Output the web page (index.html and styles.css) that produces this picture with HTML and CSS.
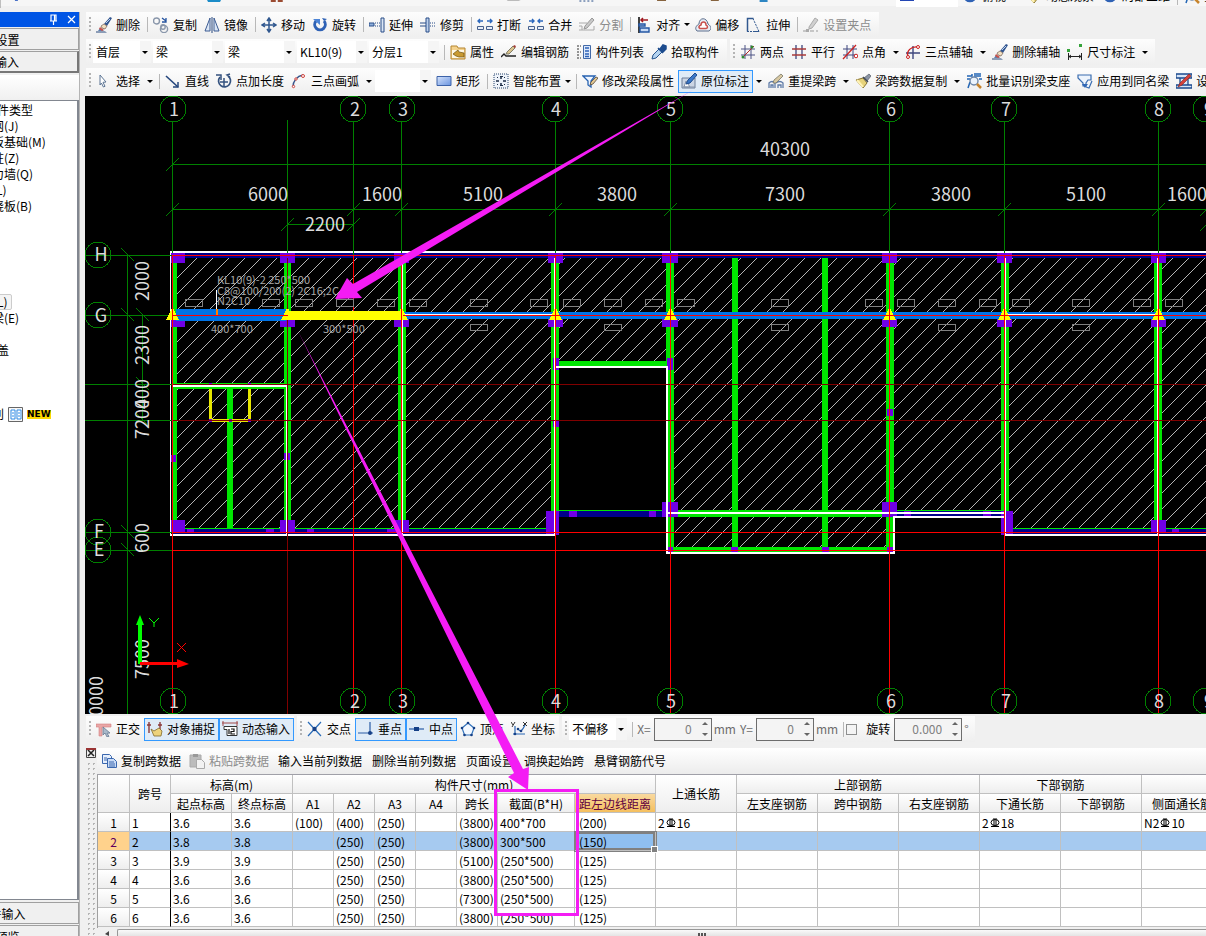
FILE: index.html
```html
<!DOCTYPE html>
<html lang="zh-CN">
<head>
<meta charset="utf-8">
<title>梁原位标注</title>
<link rel="stylesheet" href="styles.css">
</head>
<body>
<svg class="sprite" aria-hidden="true">
  <symbol id="brush" viewBox="0 0 16 16"><path d="M0 14.5h9l2 1H0z" fill="#26497c"/><path d="M2 14l2-3 4 3z" fill="#5a7fb0"/><path d="M8 7l6-7 2 1-5 8z" fill="#31558f"/><path d="M10 6l4-4" stroke="#b9cfee"/><path d="M5 9l3-2 3 2-2 3-3-1z" fill="#f2dfc0" stroke="#6e5a50" stroke-width=".7"/><path d="M4 10l4 3-2 1-3-2z" fill="#c9524a"/></symbol>
  <symbol id="copy" viewBox="0 0 16 16"><g fill="none" stroke="#8a97ab" stroke-width="1.4"><circle cx="3.5" cy="4" r="3"/><circle cx="11" cy="12" r="3.6"/><circle cx="10" cy="10" r="2.2"/></g><path d="M9 1l4 3m0-3v4H9" stroke="#2453a0" fill="none" stroke-width="1.3"/></symbol>
  <symbol id="mirror" viewBox="0 0 16 16"><path d="M6 1v13H1zM10 1v13h5z" fill="#dbe6f5" stroke="#3d5c93"/><path d="M8 0v16" stroke="#29497f"/></symbol>
  <symbol id="move" viewBox="0 0 16 16"><path d="M8 2v12M2 8h12M6 4l2-3 2 3M6 12l2 3 2-3M4 6L1 8l3 2M12 6l3 2-3 2" fill="none" stroke="#31588f" stroke-width="1.5"/></symbol>
  <symbol id="rotate" viewBox="0 0 16 16"><path d="M4 4a5.3 5.3 0 1 0 8 0" fill="none" stroke="#2f62b5" stroke-width="3"/><path d="M1 2h7v6z" fill="#4c84d6"/><path d="M12 4l-2-3 5 1z" fill="#2f62b5"/></symbol>
  <symbol id="extend" viewBox="0 0 16 16"><path d="M0 6h5v3H0z" fill="#8fb0dd" stroke="#294d88"/><path d="M6 6h6M6 9h6" stroke="#294d88" stroke-dasharray="1 1"/><path d="M12 1h3v14h-3z" fill="#dbe6f5" stroke="#294d88"/></symbol>
  <symbol id="trim" viewBox="0 0 16 16"><path d="M0 6h6M0 9h6" stroke="#294d88"/><path d="M10 6h6M10 9h6" stroke="#294d88" stroke-dasharray="1 1"/><path d="M6 1h3v14H6z" fill="#bcd0ec" stroke="#294d88"/></symbol>
  <symbol id="break" viewBox="0 0 16 16"><path d="M1 4h5M10 4h5M3 2L1 4l2 2M13 2l2 2-2 2" fill="none" stroke="#2c68bd" stroke-width="1.4"/><path d="M.5 9.500h6v3h-6zM9.500 9.500h6v3h-6z" fill="#e8eef8" stroke="#46618e"/></symbol>
  <symbol id="join" viewBox="0 0 16 16"><path d="M1 4h5M10 4h5M4 2l2 2-2 2M12 2l-2 2 2 2" fill="none" stroke="#2c68bd" stroke-width="1.400"/><path d="M.5 9.500h6v3h-6zM9.500 9.500h6v3h-6z" fill="#e8eef8" stroke="#46618e"/></symbol>
  <symbol id="split" viewBox="0 0 16 16"><path d="M0 6h8M0 13h15M0 9h3v4M15 9v4" fill="none" stroke="#aaa"/><path d="M5 12l1-3 7-8 2 2-7 8z" fill="#c9c9c9" stroke="#999"/></symbol>
  <symbol id="align" viewBox="0 0 16 16"><path d="M3 0v16" stroke="#111" stroke-width="1.6"/><path d="M5 3h7M7 1L5 3l2 2" fill="none" stroke="#a01820" stroke-width="1.500"/><path d="M3 7h6v2H3zM4 11h9v4H4z" fill="#c6d9f4" stroke="#2457a4" stroke-width="1.400"/></symbol>
  <symbol id="offset" viewBox="0 0 16 16"><path d="M2 14c-3-3 0-6 2-7 0-7 8-7 9 0 3 2 4 5 1 7z" fill="#e8edf5" stroke="#5d6f8d"/><path d="M5 11.500c-2-1-1-3 1-3.500 0-4 5-4 5 0 2 1 2 3 0 3.500z" fill="#fff" stroke="#c9514d" stroke-width="1.500"/></symbol>
  <symbol id="stretch" viewBox="0 0 16 16"><path d="M1.500 14.500v-13h6" fill="none" stroke="#31588f" stroke-width="1.500"/><path d="M7 1.500l5 11M1 14.500h8" fill="none" stroke="#31588f" stroke-dasharray="2 1"/><path d="M9 14.500h4l-1-2" fill="none" stroke="#31588f"/></symbol>
  <symbol id="grip" viewBox="0 0 16 16"><path d="M0 14h4M7 14h4M13 14h2" stroke="#999"/><path d="M3 12h3v3H3z" fill="#aaa"/><path d="M6 10l6-9 3 2-6 8-3 1z" fill="#d0d0d0" stroke="#aaa"/></symbol>
  <symbol id="props" viewBox="0 0 16 16"><path d="M1 2h6l1 2h7v11H1z" fill="#f4d28d" stroke="#b5852e"/><path d="M2 6h12v8H2z" fill="#fff8e4"/><path d="M3 10l5-4 1 2 5 1v4H9l-3-1z" fill="#c99a32" stroke="#6f5212" stroke-width=".7"/></symbol>
  <symbol id="rebar" viewBox="0 0 16 16"><path d="M0 13l3-3 2 2h10" fill="none" stroke="#222" stroke-width="1.400"/><path d="M5 10l1-2 6-6 2 2-6 6z" fill="#d9c28b" stroke="#665" stroke-width=".8"/><path d="M12 2l2-1 1 2-1 1z" fill="#a73d37"/></symbol>
  <symbol id="list" viewBox="0 0 16 16"><path d="M1 2h4M1 5h2M1 8h4M1 11h2M1 14h4" stroke="#333" stroke-dasharray="2 1"/><path d="M7.500 1.500h7v13h-7z" fill="#dce8fa" stroke="#4169a8"/><path d="M9 4h4M9 7h4M9 10h4M9 12.500h4" stroke="#2c62b8" stroke-width="1.400"/></symbol>
  <symbol id="pick" viewBox="0 0 16 16"><path d="M1 15l1-4 6-6 3 3-6 6z" fill="#b4d3f0" stroke="#28558f"/><path d="M7 4l5 5M9 5l3-4 3 1 0 3-3 3z" fill="#1d4c8e" stroke="#1d4c8e" stroke-width="1.500"/></symbol>
  <symbol id="twopt" viewBox="0 0 16 16"><path d="M5 1v14M11 1v14M1 5h14M1 11h14" stroke="#4c5384"/><path d="M2 14L14 2" stroke="#b02a2a"/><circle cx="3" cy="13" r="1.500" fill="#2f8a2f"/><circle cx="12" cy="3" r="1.500" fill="#2f8a2f"/></symbol>
  <symbol id="parallel" viewBox="0 0 16 16"><path d="M5 1v14M11 1v14" stroke="#3e477e" stroke-width="1.300"/><path d="M1 5h14M1 11h14" stroke="#a83a3a" stroke-width="1.300"/></symbol>
  <symbol id="angle" viewBox="0 0 16 16"><path d="M5 1v14M11 1v14M1 5h14M1 11h14" stroke="#3e477e"/><path d="M1 15L14 1" stroke="#c22" stroke-width="1.300"/><circle cx="14" cy="12" r="1.800" fill="#fff" stroke="#c22"/></symbol>
  <symbol id="axis3" viewBox="0 0 16 16"><path d="M1 9h14M8 2v13" stroke="#3e477e" stroke-width="1.400"/><path d="M3 13C1 7 6 2 13 3" fill="none" stroke="#c22" stroke-width="1.400"/><circle cx="3" cy="13" r="1.500" fill="#fff" stroke="#c22"/><circle cx="13" cy="3" r="1.500" fill="#fff" stroke="#c22"/></symbol>
  <symbol id="dim" viewBox="0 0 16 16"><path d="M1.500 9v7M14.500 9v7M2 12.500h12M4 11l-2 1.500L4 14M12 11l2 1.500-2 1.500" fill="none" stroke="#222"/><path d="M0 5h3v3H0zM12 0h3v3h-3z" fill="#36a33b"/></symbol>
  <symbol id="select" viewBox="0 0 16 16"><path d="M4 2l6 7-3 .3 2 4-1.600.700-2-4L4 12z" fill="#fff" stroke="#5c7594"/></symbol>
  <symbol id="line" viewBox="0 0 16 16"><path d="M1 3l12 11" stroke="#24457c" stroke-width="1.600"/><path d="M13 9v5H8" fill="none" stroke="#24457c" stroke-width="1.500"/></symbol>
  <symbol id="ptlen" viewBox="0 0 16 16"><path d="M4 4a6 6 0 1 0 8-1" fill="none" stroke="#34527f" stroke-width="1.700"/><path d="M0 2h5v5M14 4l-3-2 3-1M8 5v8M4 9h8" fill="none" stroke="#34527f" stroke-width="1.500"/></symbol>
  <symbol id="arc" viewBox="0 0 16 16"><path d="M2 14C2 8 6 3 12 2" fill="none" stroke="#35548a" stroke-width="1.500"/><g fill="#fff" stroke="#d0433c"><circle cx="2.500" cy="13.500" r="1.200"/><circle cx="5" cy="6" r="1.200"/><circle cx="12" cy="3" r="1.500"/></g></symbol>
  <symbol id="rect" viewBox="0 0 16 16"><defs><linearGradient id="rg" x2="1" y2="1"><stop stop-color="#d5e3fb"/><stop offset="1" stop-color="#6a94e0"/></linearGradient></defs><path d="M1 3.500h14v9H1z" fill="url(#rg)" stroke="#3c62a8"/></symbol>
  <symbol id="smart" viewBox="0 0 16 16"><path d="M1 1h14v14H1z" fill="#eef3fa" stroke="#28466f" stroke-dasharray="1 1"/><path d="M8 3v3M8 10v3M3 8h3M10 8h3" stroke="#1c2c45" stroke-width="1.500"/><path d="M4 4h1v1H4zM11 4h1v1h-1zM4 11h1v1H4zM11 11h1v1h-1zM7 3h3v1H7zM7 12h3v1H7z" fill="#1c2c45"/></symbol>
  <symbol id="modify" viewBox="0 0 16 16"><path d="M1 3h12l-4 5v6l-3-2V8z" fill="#eef5ff" stroke="#2762b0" stroke-width="1.300"/><path d="M8 12l1-3 5-5 2 1-5 6z" fill="#e3c892" stroke="#54483a" stroke-width=".8"/></symbol>
  <symbol id="inplace" viewBox="0 0 16 16"><path d="M1 5h13v10H1z" fill="#cbd5e4" stroke="#6d7e99"/><path d="M3 14l2-6 4 6zM2 14h12" fill="#fff" stroke="#8292ab"/><path d="M5 11l2-4 7-7 2 2-7 8z" fill="#3a78c9" stroke="#1f4c8e"/></symbol>
  <symbol id="respan" viewBox="0 0 16 16"><path d="M1 15V10q3-3 6 0v5M8 10q4-3 7 0v5M3 15v-3h2v3M10 15v-3h3v3" fill="none" stroke="#5f7ba7" stroke-width="1.300"/><path d="M5 10l1-3 7-6 2 2-7 7z" fill="#d8c8a2" stroke="#776" stroke-width=".8"/></symbol>
  <symbol id="sweep" viewBox="0 0 16 16"><path d="M9 5l5-4 2 2-4 5z" fill="#8b94a4" stroke="#565d69" stroke-width=".7"/><path d="M1 7l7-2 4 5-4 5z" fill="#e7d37b" stroke="#8a7530"/><path d="M2 7l6 7" stroke="#fff3b7" stroke-width="2"/><path d="M8 4l5 5" stroke="#414a58" stroke-width="1.500"/></symbol>
  <symbol id="batch" viewBox="0 0 16 16"><path d="M1 3h5V1M8 3h7M1 6h3M13 6h3M2 15l2-6M8 1h7" fill="none" stroke="#2366b5" stroke-width="1.500"/><circle cx="8" cy="8" r="4" fill="#ecf4fc" stroke="#6d86a8" stroke-width="1.400"/><path d="M11 11l4 4" stroke="#c7842c" stroke-width="2.500"/></symbol>
  <symbol id="apply" viewBox="0 0 16 16"><path d="M1 2h13v5h-3L9 10v3H6v-3L1 5zM9 14l3 1 3-7" fill="#edf4fd" stroke="#3a6db0" stroke-width="1.200"/><path d="M5 11l3 4 3-4z" fill="#2f67b6"/></symbol>
  <symbol id="setup" viewBox="0 0 16 16"><path d="M0 1h16v4H0zM0 12h16v3H0zM4 5h8v7H4z" fill="#d7e4f6" stroke="#1b4a8e" stroke-width="1.300"/><path d="M2 14l2-4 9-9 2 2-9 9z" fill="#d5413a" stroke="#802020" stroke-width=".6"/></symbol>
  <symbol id="ortho" viewBox="0 0 16 16"><path d="M0 3h15v3H6v9H3V6H0z" fill="#e9a6a6" stroke="#d48080" stroke-width=".6"/><path d="M7 6l7 6-3 .3 2 3-2 .700-2-4-2 2z" fill="#a9b9ca" stroke="#5b7089" stroke-width=".7"/></symbol>
  <symbol id="snap" viewBox="0 0 16 16"><path d="M2 1v11M13 1v8M0 4h4M11 4h4" stroke="#8b3a3a" stroke-width="1.400"/><path d="M4 8l3 2 5-3 3 3-1 5H7z" fill="#edd37c" stroke="#81692b" stroke-width=".8"/></symbol>
  <symbol id="dyn" viewBox="0 0 16 16"><path d="M0 2h16M1 0v5M15 0v5" stroke="#a04848"/><path d="M2 5.500h13v9H5v-6H2z" fill="#fff" stroke="#333"/><path d="M7 8v5M9 8h3v2.500H9V13h4" fill="none" stroke="#111" stroke-width="1.200"/></symbol>
  <symbol id="cross" viewBox="0 0 16 16"><path d="M1 1l13 14M14 1L1 15" stroke="#2a6cb8" stroke-width="1.200"/><circle cx="7.500" cy="8" r="2.200" fill="#153f86"/></symbol>
  <symbol id="perp" viewBox="0 0 16 16"><path d="M0 12h15M12 1v11" stroke="#2a5ca5" stroke-width="1.200"/><circle cx="12" cy="12" r="2" fill="#153f86"/></symbol>
  <symbol id="mid" viewBox="0 0 16 16"><path d="M0 8h15" stroke="#2a5ca5" stroke-width="1.200"/><path d="M5 6h5v4H5z" fill="#153f86"/></symbol>
  <symbol id="vertex" viewBox="0 0 16 16"><path d="M8 2l6 5-2.500 7h-7L2 7z" fill="#f3f8ff" stroke="#3474bc" stroke-width="1.200"/><g fill="#153f86"><circle cx="8" cy="2" r="1.300"/><circle cx="14" cy="7" r="1.300"/><circle cx="11.500" cy="14" r="1.300"/><circle cx="4.500" cy="14" r="1.300"/><circle cx="2" cy="7" r="1.300"/></g></symbol>
  <symbol id="coord" viewBox="0 0 16 16"><path d="M4 5v8M2 13h12M7 8c3 4 5 0 7-4" fill="none" stroke="#2866b4" stroke-width="1.200"/><path d="M0 1l2 3m2-3L1 6M12 1l4 4m0-4l-4 4" stroke="#333"/><g fill="#153f86"><circle cx="7" cy="8" r="1.300"/><circle cx="4" cy="13" r="1.300"/><circle cx="10" cy="10" r="1.300"/></g></symbol>
  <symbol id="docs" viewBox="0 0 16 16"><path d="M1.500 1.500h7l2 2v7h-9z" fill="#e6effc" stroke="#3a67ae"/><path d="M6.500 5.500h6l3 3v6h-9z" fill="#c9dcf7" stroke="#3a67ae"/><path d="M3 5h3M3 7h3M8 9h5M8 11h6M8 13h6" stroke="#3a67ae"/></symbol>
  <symbol id="paste" viewBox="0 0 16 16"><path d="M1 2h11v12H1z" fill="#bcbcbc" stroke="#aaa"/><path d="M4 1h5v3H4z" fill="#999"/><path d="M7.500 6.500h5l3 3v6h-8z" fill="#f2f2f2" stroke="#aaa"/></symbol>
  <symbol id="phi" viewBox="0 0 12 12"><ellipse cx="6" cy="5.500" rx="4" ry="3" fill="none" stroke="#000"/><path d="M5 1v9M7 1v9M2 9.500h8" stroke="#000"/></symbol>
</svg>

<header class="topstrip">
  <svg class="fragments" viewBox="0 0 900 12" aria-hidden="true"><path d="M0 0v8" stroke="#888"/><path d="M15 0h3v1h-3z" fill="#4a72c8"/><path d="M208 0h14l-1 2h-12z" fill="#1b8cc8"/><path d="M272 0h5v2h-5zM279 0h5v2h-5z" fill="#9b4b32"/><path d="M509 0h14l-2 1h-11z" fill="#bbb"/><path d="M582 1h16" stroke="#234b87" stroke-dasharray="2 2"/><path d="M660 0h9v1h-9zM714 0h8v1h-8z" fill="#86633e"/><path d="M763 0h8v2h-8z" fill="#2e86c3"/></svg>
  <span class="swatch"></span>
  <span class="cut"><svg class="ico"><use href="#rotate"/></svg>俯视</span>
  <span class="cut wide"><svg class="ico"><use href="#sweep"/></svg>动态观察</span>
  <span class="cut"><svg class="ico"><use href="#rotate"/></svg>局部三维</span>
  <span class="sep"></span>
  <span class="cut"><svg class="ico"><use href="#batch"/></svg>全屏</span>
</header>

<div class="work">
<aside class="side"><div class="side-in">
  <div class="caption"><svg width="26" height="12" viewBox="0 0 26 12"><path d="M0 7h7M1 7V1h5v6M4.500 1v6M3.500 7v4" fill="none" stroke="#fff" stroke-width="1.200"/><path d="M18 2l7 7M25 2l-7 7" stroke="#fff" stroke-width="1.200"/></svg></div>
  <button class="nav">工程设置</button>
  <button class="nav raised">绘图输入</button>
  <div class="side-tools"></div>
  <ul class="tree">
    <li class="head">常用构件类型</li><li>轴网(J)</li><li>筏板基础(M)</li><li>框柱(Z)</li><li>剪力墙(Q)</li><li>梁(L)</li><li>现浇板(B)</li>
    <li></li><li></li><li></li><li></li><li></li>
    <li><span class="hot">梁(L)</span></li><li>圈梁(E)</li><li></li><li class="head2">顶盖</li><li></li><li></li><li></li>
    <li class="ident">识别<svg width="15" height="15" viewBox="0 0 15 15"><path d="M.5.5h14v14H.5z" fill="#f7f7f7" stroke="#666"/><path d="M3 3h4v9H3zM9 3h4v9H9z" fill="#fff" stroke="#2e8be6"/><path d="M4 6h2M4 9h2M10 6h2M10 9h2" stroke="#2e8be6"/></svg><b>NEW</b></li>
  </ul>
  <button class="nav">单构件输入</button>
  <button class="nav">报表预览</button>
</div></aside>

<main class="main">
<div class="bar r1"><div class="strip">
  <i class="grip"></i>
  <button class="tool"><svg class="ico"><use href="#brush"/></svg>删除</button><i class="sep"></i>
  <button class="tool"><svg class="ico"><use href="#copy"/></svg>复制</button>
  <button class="tool"><svg class="ico"><use href="#mirror"/></svg>镜像</button><i class="sep"></i>
  <button class="tool"><svg class="ico"><use href="#move"/></svg>移动</button>
  <button class="tool"><svg class="ico"><use href="#rotate"/></svg>旋转</button><i class="sep"></i>
  <button class="tool"><svg class="ico"><use href="#extend"/></svg>延伸</button>
  <button class="tool"><svg class="ico"><use href="#trim"/></svg>修剪</button><i class="sep"></i>
  <button class="tool"><svg class="ico"><use href="#break"/></svg>打断</button>
  <button class="tool"><svg class="ico"><use href="#join"/></svg>合并</button>
  <button class="tool" disabled><svg class="ico"><use href="#split"/></svg>分割</button><i class="sep"></i>
  <button class="tool menu"><svg class="ico"><use href="#align"/></svg>对齐</button>
  <button class="tool"><svg class="ico"><use href="#offset"/></svg>偏移</button>
  <button class="tool"><svg class="ico"><use href="#stretch"/></svg>拉伸</button><i class="sep"></i>
  <button class="tool" disabled><svg class="ico"><use href="#grip"/></svg>设置夹点</button>
</div></div>

<div class="bar r2"><div class="strip">
  <i class="grip"></i>
  <span class="combo small"><select aria-label="楼层"><option>首层</option></select></span>
  <span class="combo"><select aria-label="构件大类"><option>梁</option></select></span>
  <span class="combo"><select aria-label="构件类型"><option>梁</option></select></span>
  <span class="combo"><select aria-label="构件名称"><option>KL10(9)</option></select></span>
  <span class="combo"><select aria-label="分层"><option>分层1</option></select></span><i class="sep"></i>
  <button class="tool"><svg class="ico"><use href="#props"/></svg>属性</button>
  <button class="tool"><svg class="ico"><use href="#rebar"/></svg>编辑钢筋</button>
  <button class="tool"><svg class="ico"><use href="#list"/></svg>构件列表</button>
  <button class="tool"><svg class="ico"><use href="#pick"/></svg>拾取构件</button>
</div><div class="strip">
  <i class="grip"></i>
  <button class="tool"><svg class="ico"><use href="#twopt"/></svg>两点</button>
  <button class="tool"><svg class="ico"><use href="#parallel"/></svg>平行</button>
  <button class="tool"><svg class="ico"><use href="#angle"/></svg>点角</button><button class="drop" aria-label="点角选项"></button>
  <button class="tool"><svg class="ico"><use href="#axis3"/></svg>三点辅轴</button><button class="drop" aria-label="三点辅轴选项"></button>
  <button class="tool"><svg class="ico"><use href="#brush"/></svg>删除辅轴</button>
  <button class="tool"><svg class="ico"><use href="#dim"/></svg>尺寸标注</button><button class="drop" aria-label="尺寸标注选项"></button>
</div></div>

<div class="bar r3"><div class="strip grow">
  <i class="grip"></i>
  <button class="tool"><svg class="ico"><use href="#select"/></svg>选择</button><button class="drop" aria-label="选择选项"></button><i class="sep"></i>
  <button class="tool"><svg class="ico"><use href="#line"/></svg>直线</button>
  <button class="tool"><svg class="ico"><use href="#ptlen"/></svg>点加长度</button>
  <button class="tool"><svg class="ico"><use href="#arc"/></svg>三点画弧</button><button class="drop" aria-label="三点画弧选项"></button>
  <span class="combo small"><select aria-label="画弧方式"><option></option></select></span>
  <button class="tool"><svg class="ico"><use href="#rect"/></svg>矩形</button><i class="sep"></i>
  <button class="tool menu"><svg class="ico"><use href="#smart"/></svg>智能布置</button><i class="sep"></i>
  <button class="tool"><svg class="ico"><use href="#modify"/></svg>修改梁段属性</button>
  <button class="tool on"><svg class="ico"><use href="#inplace"/></svg>原位标注</button><button class="drop" aria-label="原位标注选项"></button>
  <button class="tool"><svg class="ico"><use href="#respan"/></svg>重提梁跨</button><button class="drop" aria-label="重提梁跨选项"></button>
  <button class="tool"><svg class="ico"><use href="#sweep"/></svg>梁跨数据复制</button><button class="drop" aria-label="梁跨数据复制选项"></button>
  <button class="tool"><svg class="ico"><use href="#batch"/></svg>批量识别梁支座</button>
  <button class="tool"><svg class="ico"><use href="#apply"/></svg>应用到同名梁</button>
  <button class="tool"><svg class="ico"><use href="#setup"/></svg>设置拱梁</button>
</div></div>

<div class="canvas">
<svg class="plan" viewBox="85 96 1121 618" preserveAspectRatio="xMinYMin slice" role="img" aria-label="梁平面图">
  <defs>
    <pattern id="hatch" width="16" height="16" patternUnits="userSpaceOnUse" patternTransform="translate(7 0)"><path d="M-1 17L17-1" stroke="#b4b4b4" shape-rendering="crispEdges"/></pattern>
    <circle id="bub" r="13" fill="none" stroke="#008000"/>
    <path id="tk" d="M-6 7L7-6" stroke="#008000"/>
    <path id="tl" d="M-6-7L7 6" stroke="#008000"/>
    <path id="tri" d="M-.5-7h2L7 4H-6z" fill="#ff0"/>
    <path id="mark" d="M.5.5h17v7H.5z" fill="none" stroke="#808080"/>
    <path id="mark2" d="M.5.5h17v6H.5z" fill="none" stroke="#808080"/>
  </defs>
  <path fill="url(#hatch)" d="M173 258H1206V529H1005V511H890V548H668V366H556V529H173z"/>

  <g shape-rendering="crispEdges">
    <g fill="#00e600">
      <path d="M172 253h5v280h-5zM284 258h7v270h-7zM398 258h8v270h-8zM551 258h8v253h-8zM666 258h8v294h-8zM732 258h6v290h-6zM822 258h6v290h-6zM886 258h8v294h-8zM1001 258h8v254h-8zM1154 258h8v270h-8z"/>
      <path d="M172 383h119v1H172zM172 387h112v2H172zM227 387h6v141h-6zM176 528h379v1H176zM1009 528h197v1h-197zM559 361h108v5H559zM559 510h108v1H559zM674 510h213v7H674zM894 510h107v1H894zM668 547h226v5H668z"/>
    </g>
    <path fill="#00008b" d="M172 253h1034v5H172zM172 529h383v5H172zM1005 529h201v5h-201zM559 511h107v6H559zM894 511h110v5H894z"/>
    <path fill="#7000e6" d="M171 253h14v10h-14zM280 253h15v10h-15zM394 253h15v10h-15zM548 253h15v10h-15zM662 253h16v10h-16zM882 253h15v10h-15zM997 253h15v10h-15zM1151 253h15v10h-15zM171 319h14v8h-14zM280 319h15v8h-15zM394 319h15v8h-15zM548 319h15v8h-15zM662 319h16v8h-16zM882 319h15v8h-15zM997 319h15v8h-15zM1151 319h15v8h-15zM171 520h14v13h-14zM280 520h15v13h-15zM394 520h15v13h-15zM546 511h13v24h-13zM662 502h16v15h-16zM882 502h15v15h-15zM1001 511h12v24h-12zM1151 520h15v13h-15zM187 529h7v4h-7zM266 529h8v4h-8zM307 529h7v4h-7zM387 529h8v4h-8zM1172 529h7v4h-7zM569 511h8v6h-8zM649 511h7v6h-7zM904 511h7v5h-7zM983 511h8v5h-8zM553 358h6v12h-6zM667 358h6v12h-6zM553 420h6v7h-6zM887 409h6v7h-6zM171 455h5v7h-5zM284 453h6v7h-6zM668 547h5v5h-5zM731 547h7v5h-7zM822 547h7v5h-7zM887 547h6v5h-6z"/>
    <path fill="#e6e600" d="M209 389h3v33h-3zM248 389h3v33h-3zM209 419h42v3h-42z"/>
    <path fill="#7000e6" d="M209 383h3v2h-3zM248 383h3v2h-3zM209 419h3v3h-3zM229 419h3v3h-3zM248 419h3v3h-3z"/>
    <path fill="#fff" d="M170 251h1036v2H170zM170 251h1v285h-1zM170 534h385v2H170zM172 385h115v2H172zM286 385h1v149h-1zM402 258h1v276h-1zM554 258h1v278h-1zM556 366h112v2H556zM666 366h2v188h-2zM666 552h229v2H666zM893 516h2v38h-2zM893 516h111v2H893zM666 512h338v2H666zM1005 258h1v278h-1zM1005 534h201v2h-201zM1157 258h1v276h-1z"/>
    <path fill="#0073e6" d="M176 309h110v12H176zM403 312h803v7H403z"/>
    <path fill="#fff" d="M403 314h152v1H403zM1005 314h153v1h-153zM216 290h1v19h-1z"/>
    <path fill="#008000" d="M172 122h1v131h-1zM287 120h1v133h-1zM353 122h1v133h-1zM401 122h1v131h-1zM555 122h1v131h-1zM670 122h1v131h-1zM889 122h1v131h-1zM1004 122h1v131h-1zM1158 122h1v131h-1zM172 164h1034v1H172zM172 209h1034v1H172zM287 224h67v1h-67zM127 255h1v459h-1zM142 315h1v106h-1zM85 255h87v1H85zM85 315h87v1H85zM85 384h87v1H85zM85 420h87v1H85zM85 532h87v1H85zM85 550h87v1H85z"/>
    <path fill="#800000" d="M287 258h1v456h-1zM172 384h1034v1H172zM172 420h1034v1H172z"/>
    <use href="#tri" x="172" y="316"/><use href="#tri" x="287" y="316"/><use href="#tri" x="401" y="316"/><use href="#tri" x="555" y="316"/><use href="#tri" x="670" y="316"/><use href="#tri" x="889" y="316"/><use href="#tri" x="1004" y="316"/><use href="#tri" x="1158" y="316"/>
    <path fill="#f00" d="M172 255h1034v1H172zM172 315h116v1H172zM403 315h803v1H403zM172 532h1034v1H172zM172 550h1034v1H172zM172 255h1v459h-1zM353 255h1v459h-1zM401 255h1v459h-1zM555 255h1v459h-1zM670 255h1v459h-1zM889 255h1v459h-1zM1004 255h1v459h-1zM1158 255h1v459h-1z"/>
    <path fill="#ff0" d="M288 311h113v9H288z"/>
    <path fill="#ff8000" d="M216 309h2v6h-2z"/>
    <use href="#mark" x="185" y="299"/><use href="#mark" x="262" y="299"/><use href="#mark" x="295" y="299"/><use href="#mark" x="336" y="299"/><use href="#mark" x="377" y="299"/><use href="#mark" x="409" y="299"/><use href="#mark" x="470" y="299"/><use href="#mark" x="530" y="299"/><use href="#mark" x="563" y="299"/><use href="#mark" x="604" y="299"/><use href="#mark" x="645" y="299"/><use href="#mark" x="677" y="299"/><use href="#mark" x="771" y="299"/><use href="#mark" x="865" y="299"/><use href="#mark" x="897" y="299"/><use href="#mark" x="938" y="299"/><use href="#mark" x="979" y="299"/><use href="#mark" x="1012" y="299"/><use href="#mark" x="1072" y="299"/><use href="#mark" x="1133" y="299"/><use href="#mark" x="1165" y="299"/>
    <use href="#mark2" x="470" y="324"/><use href="#mark2" x="604" y="324"/><use href="#mark2" x="771" y="324"/><use href="#mark2" x="938" y="324"/><use href="#mark2" x="1072" y="324"/>
    <use href="#tk" x="172" y="164"/><use href="#tk" x="172" y="209"/><use href="#tk" x="353" y="209"/><use href="#tk" x="401" y="209"/><use href="#tk" x="555" y="209"/><use href="#tk" x="670" y="209"/><use href="#tk" x="889" y="209"/><use href="#tk" x="1004" y="209"/><use href="#tk" x="1158" y="209"/><use href="#tk" x="1206" y="209"/><use href="#tk" x="287" y="224"/><use href="#tk" x="353" y="224"/><use href="#tk" x="1206" y="224"/>
    <use href="#tl" x="127" y="255"/><use href="#tl" x="127" y="315"/><use href="#tl" x="142" y="315"/><use href="#tl" x="142" y="384"/><use href="#tl" x="142" y="420"/><use href="#tl" x="127" y="532"/><use href="#tl" x="127" y="550"/>
    <use href="#bub" x="173" y="109"/><use href="#bub" x="353" y="109"/><use href="#bub" x="402" y="109"/><use href="#bub" x="555" y="109"/><use href="#bub" x="670" y="109"/><use href="#bub" x="890" y="109"/><use href="#bub" x="1004" y="109"/><use href="#bub" x="1158" y="109"/><use href="#bub" x="1206" y="109"/>
    <use href="#bub" x="173" y="701"/><use href="#bub" x="353" y="701"/><use href="#bub" x="402" y="701"/><use href="#bub" x="555" y="701"/><use href="#bub" x="670" y="701"/><use href="#bub" x="890" y="701"/><use href="#bub" x="1004" y="701"/><use href="#bub" x="1158" y="701"/><use href="#bub" x="1206" y="701"/>
    <use href="#bub" x="98" y="255"/><use href="#bub" x="98" y="315"/><use href="#bub" x="98" y="532"/><use href="#bub" x="98" y="550"/>
  </g>

  <g class="num">
    <text x="174" y="116">1</text><text x="355" y="116">2</text><text x="403" y="116">3</text><text x="556" y="116">4</text><text x="671" y="116">5</text><text x="891" y="116">6</text><text x="1006" y="116">7</text><text x="1159" y="116">8</text><text x="1209" y="116">9</text>
    <text x="174" y="708">1</text><text x="355" y="708">2</text><text x="403" y="708">3</text><text x="556" y="708">4</text><text x="671" y="708">5</text><text x="891" y="708">6</text><text x="1006" y="708">7</text><text x="1159" y="708">8</text><text x="1209" y="708">9</text>
    <text x="101" y="261">H</text><text x="101" y="322">G</text><text x="99" y="538">F</text><text x="99" y="556">E</text>
    <text x="785" y="156">40300</text><text x="268" y="201">6000</text><text x="325" y="231">2200</text><text x="382" y="201">1600</text><text x="483" y="201">5100</text><text x="617" y="201">3800</text><text x="785" y="201">7300</text><text x="951" y="201">3800</text><text x="1086" y="201">5100</text><text x="1187" y="201">1600</text>
    <text transform="translate(149 281) rotate(-90)">2000</text><text transform="translate(149 345) rotate(-90)">2300</text><text transform="translate(149 419) rotate(-90)">7200</text><text transform="translate(149 394) rotate(-90)">400</text><text transform="translate(149 538) rotate(-90)">600</text><text transform="translate(149 659) rotate(-90)">7500</text><text transform="translate(103 701) rotate(-90)">10000</text>
  </g>
  <g class="note">
    <text x="217" y="284">KL10(9)-2 250*500</text><text x="217" y="295">C8@100/200(2) 2C16;2C</text><text x="217" y="305">N2C10</text><text x="211" y="333">400*700</text><text x="323" y="333">300*500</text>
  </g>
  <path d="M138 664V625h-2l4-10 4 10h-2v39z" fill="#0f0"/><path d="M140 662h37v-3l12 5-12 4v-3h-37z" fill="#f00"/>
  <path d="M149 618l5 5 5-5M154 623v4" fill="none" stroke="#0f0"/><path d="M177 643l9 9M186 643l-9 9" stroke="#f00"/>
</svg>
</div>

<div class="bar snapbar"><div class="strip">
  <i class="grip"></i>
  <button class="tool"><svg class="ico"><use href="#ortho"/></svg>正交</button>
  <button class="tool on"><svg class="ico"><use href="#snap"/></svg>对象捕捉</button>
  <button class="tool on"><svg class="ico"><use href="#dyn"/></svg>动态输入</button>
</div><div class="strip">
  <i class="grip"></i>
  <button class="tool"><svg class="ico"><use href="#cross"/></svg>交点</button>
  <button class="tool on"><svg class="ico"><use href="#perp"/></svg>垂点</button>
  <button class="tool on"><svg class="ico"><use href="#mid"/></svg>中点</button>
  <button class="tool"><svg class="ico"><use href="#vertex"/></svg>顶点</button>
  <button class="tool"><svg class="ico"><use href="#coord"/></svg>坐标</button>
</div><div class="strip pad">
  <i class="grip"></i>
  <span class="combo small"><select aria-label="偏移方式"><option>不偏移</option></select></span><i class="sep"></i>
  <label class="unit" for="ox">X=</label><span class="spin"><input id="ox" value="0" disabled><i class="ud"></i></span><span class="unit">mm</span>
  <label class="unit" for="oy">Y=</label><span class="spin"><input id="oy" value="0" disabled><i class="ud"></i></span><span class="unit">mm</span>
  <i class="sep"></i>
  <label class="check"><input type="checkbox">旋转</label>
  <span class="spin wide"><input aria-label="旋转角度" value="0.000" disabled><i class="ud"></i></span><span class="unit">°</span>
</div></div>

<section class="panel">
  <div class="rail"><svg width="10" height="10" viewBox="0 0 10 10"><path d="M.5.5h9v9h-9z" fill="#eee" stroke="#444"/><path d="M2 2l6 6M8 2L2 8" stroke="#222" stroke-width="1.500"/><path d="M0 0h10v2H0z" fill="#933"/></svg><i></i></div>
  <div class="sheet">
    <div class="cmds">
      <button class="cmd"><svg class="ico"><use href="#docs"/></svg>复制跨数据</button>
      <button class="cmd" disabled><svg class="ico"><use href="#paste"/></svg>粘贴跨数据</button>
      <button class="cmd">输入当前列数据</button><button class="cmd">删除当前列数据</button><button class="cmd">页面设置</button><button class="cmd">调换起始跨</button><button class="cmd">悬臂钢筋代号</button>
    </div>
    <div class="gridwrap">
    <table class="grid">
      <colgroup><col class="w32"><col class="w41"><col class="w61"><col class="w61"><col class="w41"><col class="w41"><col class="w41"><col class="w41"><col class="w41"><col class="w77"><col class="w81"><col class="w81"><col class="w81"><col class="w81"><col class="w81"><col class="w81"><col class="w81"><col class="w81"><col class="w81"></colgroup>
      <thead>
        <tr><th rowspan="2"></th><th rowspan="2">跨号</th><th colspan="2">标高(m)</th><th colspan="7">构件尺寸(mm)</th><th rowspan="2">上通长筋</th><th colspan="3">上部钢筋</th><th colspan="2">下部钢筋</th><th colspan="2"></th></tr>
        <tr><th>起点标高</th><th>终点标高</th><th>A1</th><th>A2</th><th>A3</th><th>A4</th><th>跨长</th><th>截面(B*H)</th><th class="cur">距左边线距离</th><th>左支座钢筋</th><th>跨中钢筋</th><th>右支座钢筋</th><th>下通长筋</th><th>下部钢筋</th><th>侧面通长筋</th><th></th></tr>
      </thead>
      <tbody>
        <tr><th>1</th><td>1</td><td>3.6</td><td>3.6</td><td>(100)</td><td>(400)</td><td>(250)</td><td></td><td>(3800)</td><td>400*700</td><td>(200)</td><td>2<svg class="phi"><use href="#phi"/></svg>16</td><td></td><td></td><td></td><td>2<svg class="phi"><use href="#phi"/></svg>18</td><td></td><td>N2<svg class="phi"><use href="#phi"/></svg>10</td><td></td></tr>
        <tr class="sel"><th>2</th><td>2</td><td>3.8</td><td>3.8</td><td></td><td>(250)</td><td>(250)</td><td></td><td>(3800)</td><td>300*500</td><td class="focus">(150)</td><td></td><td></td><td></td><td></td><td></td><td></td><td></td><td></td></tr>
        <tr><th>3</th><td>3</td><td>3.9</td><td>3.9</td><td></td><td>(250)</td><td>(250)</td><td></td><td>(5100)</td><td>(250*500)</td><td>(125)</td><td></td><td></td><td></td><td></td><td></td><td></td><td></td><td></td></tr>
        <tr><th>4</th><td>4</td><td>3.6</td><td>3.6</td><td></td><td>(250)</td><td>(250)</td><td></td><td>(3800)</td><td>(250*500)</td><td>(125)</td><td></td><td></td><td></td><td></td><td></td><td></td><td></td><td></td></tr>
        <tr><th>5</th><td>5</td><td>3.6</td><td>3.6</td><td></td><td>(250)</td><td>(250)</td><td></td><td>(7300)</td><td>(250*500)</td><td>(125)</td><td></td><td></td><td></td><td></td><td></td><td></td><td></td><td></td></tr>
        <tr><th>6</th><td>6</td><td>3.6</td><td>3.6</td><td></td><td>(250)</td><td>(250)</td><td></td><td>(3800)</td><td>(250*500)</td><td>(125)</td><td></td><td></td><td></td><td></td><td></td><td></td><td></td><td></td></tr>
      </tbody>
    </table>
    </div>
    <div class="hscroll"><svg width="20" height="8" viewBox="0 0 20 8"><path d="M12 3v5L8 6z" fill="#444"/></svg><div class="thumb"><i></i></div></div>
  </div>
</section>
</main>
</div>

<svg class="callout" aria-hidden="true"><g fill="#f41cf4"><path d="M693 90L353 284l-6-6-12 21 27-1-5-6z"/><path d="M298 331L514 773l-6 4 20 13 1-23-6 2z"/></g><path d="M495.500 790.500h82v124h-82z" fill="none" stroke="#f41cf4" stroke-width="3"/></svg>
</body>
</html>
```
FILE: styles.css
```css
* { box-sizing: border-box; }
body {
  margin: 0;
  height: 100vh;
  display: flex;
  flex-direction: column;
  position: relative;
  overflow: hidden;
  background: #f0f0f0;
  color: #000;
  font: 12px/16px "Noto Sans CJK SC", sans-serif;
}
button, input, select { font: inherit; color: inherit; margin: 0; padding: 0; border: 0; background: none; border-radius: 0; }
.sprite { position: absolute; width: 0; height: 0; }
.ico { width: 16px; height: 16px; flex: none; }
i { font-style: normal; }

/* sliver of the upper toolbar */
.topstrip { height: 12px; flex: none; display: flex; align-items: flex-start; overflow: hidden; background: linear-gradient(#f6f6f6 6px, #f0f0f0 6px); }
.fragments { width: 896px; height: 12px; flex: none; }
.swatch { width: 62px; height: 7px; flex: none; background: linear-gradient(90deg, transparent 4px, #2346b4 4px 18px, transparent 18px) 0 0 / 100% 1px no-repeat, #fff; }
.cut { display: flex; gap: 4px; padding: 0 4px 0 4px; margin-top: -12px; flex: none; white-space: nowrap; }
.cut.wide { padding-left: 16px; }
.topstrip .sep { height: 5px; }

.work { flex: 1; min-height: 0; display: flex; }

/* navigation column, scrolled under the window edge */
.side { width: 80px; flex: none; overflow: hidden; display: flex; justify-content: flex-end; border-right: 1px solid #b4b4b4; }
.side-in { width: 166px; flex: none; display: flex; flex-direction: column; margin-bottom: -12px; }
.caption { height: 15px; flex: none; background: #0055e5; display: flex; justify-content: flex-end; align-items: center; padding-right: 3px; margin-bottom: 1px; }
.nav { height: 22px; flex: none; text-align: center; border: 1px solid #a0a0a0; border-left: 0; background: #f0f0f0; margin-bottom: 1px; padding-top: 1px; }
.nav.raised { border-right: 2px solid #777; border-bottom: 2px solid #777; }
.side-tools { height: 25px; flex: none; background: linear-gradient(#fff, #f0f0f0); margin-top: 1px; }
.tree { flex: 1; min-height: 0; margin: 0 0 2px; padding: 1px 0 0 66px; list-style: none; background: #fff; border: 1px solid #828790; border-right-width: 2px; overflow: hidden; white-space: nowrap; }
.tree li { height: 16px; }
.tree .head { margin-left: -19px; }
.tree .head2 { padding-left: 5px; }
.hot { display: inline-block; border: 1px solid #ccc; border-radius: 2px; background: #f4f4f4; padding-right: 3px; line-height: 14px; }
.tree .ident { display: flex; align-items: center; gap: 4px; }
.ident svg { flex: none; }
.ident b { font: 700 9px/9px "DejaVu Sans", sans-serif; background: #ffd800; }

/* toolbars */
.main { flex: 1; min-width: 0; display: flex; flex-direction: column; padding-left: 5px; }
.bar { flex: none; display: flex; gap: 3px; padding-left: 1px; overflow: hidden; background: #f0f0f0; }
.strip { display: flex; align-items: center; flex: none; background: linear-gradient(#fdfdfd, #efefef); padding-right: 4px; }
.strip.grow { flex: 1 0 auto; }
.r1 { height: 27px; padding-bottom: 2px; }
.r2 { height: 28px; padding-bottom: 2px; }
.r3 { height: 29px; padding: 1px 0 2px 1px; }
.snapbar { height: 34px; padding: 2px 0 6px 1px; }
.snapbar .strip:not(.pad) { padding-right: 0; }
.grip { width: 7px; height: 16px; flex: none; background: repeating-linear-gradient(#b4b4b4 0 2px, transparent 2px 4px) 3px 0 / 2px 100% no-repeat; }
.sep { width: 6px; height: 15px; flex: none; background: linear-gradient(#b8b8b8, #b8b8b8) 3px 0 / 1px 100% no-repeat; }
.tool { display: flex; align-items: center; gap: 4px; flex: none; height: 23px; padding: 0 4px 0 3px; white-space: nowrap; }
.tool:disabled, .cmd:disabled { color: #8c8c8c; }
.tool.on { background: #dfebf7; box-shadow: inset 0 0 0 1px #3399ff; }
.tool.menu::after, .drop::after, .combo::after { content: ""; flex: none; border: 3px solid transparent; border-top-color: #000; border-bottom: 0; }
.tool.menu::after { margin-right: -2px; }
.drop { width: 12px; height: 23px; flex: none; display: flex; align-items: center; justify-content: center; }
.combo { width: 70px; height: 22px; margin-right: 2px; flex: none; display: flex; align-items: center; padding-right: 3px; background: linear-gradient(90deg, #fff calc(100% - 11px), #f5f5f5 calc(100% - 11px)); }
.combo.small { width: 58px; }
.r3 .combo.small { width: 56px; }
.combo select { appearance: none; flex: 1; min-width: 0; padding-left: 3px; height: 22px; outline: 0; }

.unit { color: #6d6d6d; padding: 0 2px; }
label.unit { padding: 0 3px 0 2px; }
.spin { display: flex; align-items: center; width: 58px; height: 23px; border: 1px solid #6d6d6d; background: #f4f4f4; padding-right: 3px; }
.spin.wide { width: 68px; }
.spin input { flex: 1; min-width: 0; text-align: right; color: #808080; padding-right: 10px; }
.ud { width: 6px; height: 14px; display: flex; flex-direction: column; justify-content: space-between; }
.ud::before, .ud::after { content: ""; border: 3px solid transparent; }
.ud::before { border-bottom-color: #666; border-top: 0; }
.ud::after { border-top-color: #666; border-bottom: 0; }
.check { display: flex; align-items: center; gap: 9px; padding-right: 4px; }
.check input { appearance: none; width: 11px; height: 11px; border: 1px solid #8e8f8f; background: #f4f4f4; }

/* drawing area */
.canvas { flex: 1; min-height: 0; background: #000; overflow: hidden; }
.plan { display: block; width: 100%; height: 100%; }
.num text { font-size: 18px; fill: #dcdcdc; text-anchor: middle; }
.note text { font-size: 11px; fill: #a8a8a8; }

/* span data sheet */
.panel { flex: none; display: flex; }
.rail { width: 12px; flex: none; padding-left: 1px; display: flex; flex-direction: column; gap: 3px; }
.rail i { flex: 1; background: radial-gradient(circle, #b4b4b4 1px, transparent 1px) 0 0 / 5px 5px; margin-right: 1px; }
.sheet { flex: 1; min-width: 0; }
.cmds { height: 27px; display: flex; align-items: center; padding: 0 0 1px; background: linear-gradient(#fff, #ececec); border-bottom: 1px solid #a0a0a8; }
.cmd { display: flex; align-items: center; gap: 4px; padding: 0 5px; white-space: nowrap; flex: none; }
.cmd:has(.ico) { padding: 0 4px; }
.gridwrap { overflow: hidden; border-left: 1px solid #a0a0a0; height: 153px; }
.grid { table-layout: fixed; border-collapse: separate; border-spacing: 0; width: 1206px; }
.w32 { width: 32px; } .w41 { width: 41px; } .w61 { width: 61px; } .w77 { width: 77px; } .w81 { width: 81px; }
.grid th, .grid td { height: 19px; padding: 1px 0 0; line-height: 16px; font-weight: 400; white-space: nowrap; border-right: 1px solid #c0c0c0; border-bottom: 1px solid #c0c0c0; }
.grid td { padding-left: 2px; background: #fff; text-align: left; }
.grid th { text-align: center; background: linear-gradient(#fff, #eee); }
.grid thead .cur { background: linear-gradient(#f9d99f, #f5bf5e); color: #600040; }
.grid tbody td:nth-child(2) { border-right-color: #000; }
.grid .sel td { background: #a6caf0; }
.grid .sel th { background: #ffd28c; color: #600060; }
.grid .sel .focus { background: #8fbff0; box-shadow: 0 0 0 1px #808080, inset 0 0 0 2px #808080; position: relative; }
.grid td:nth-child(11) { padding-left: 4px; }
.focus::after { content: ""; position: absolute; right: -3px; bottom: -3px; width: 5px; height: 5px; background: #808080; border: 1px solid #fff; }
.phi { width: 12px; height: 12px; vertical-align: -1px; }
.hscroll { height: 8px; display: flex; background: #f0f0f0; overflow: hidden; }
.thumb { flex: 1; border: 1px solid #979797; border-bottom: 0; border-right: 0; border-radius: 2px 0 0 0; margin-top: 1px; background: linear-gradient(#fafafa, #e4e4e4); display: flex; justify-content: center; }
.thumb i { width: 9px; height: 5px; margin-top: 3px; margin-left: 80px; background: repeating-linear-gradient(90deg, #555 0 2px, transparent 2px 3px); }

.callout { position: absolute; left: 0; top: 0; width: 100%; height: 100%; pointer-events: none; }
```
